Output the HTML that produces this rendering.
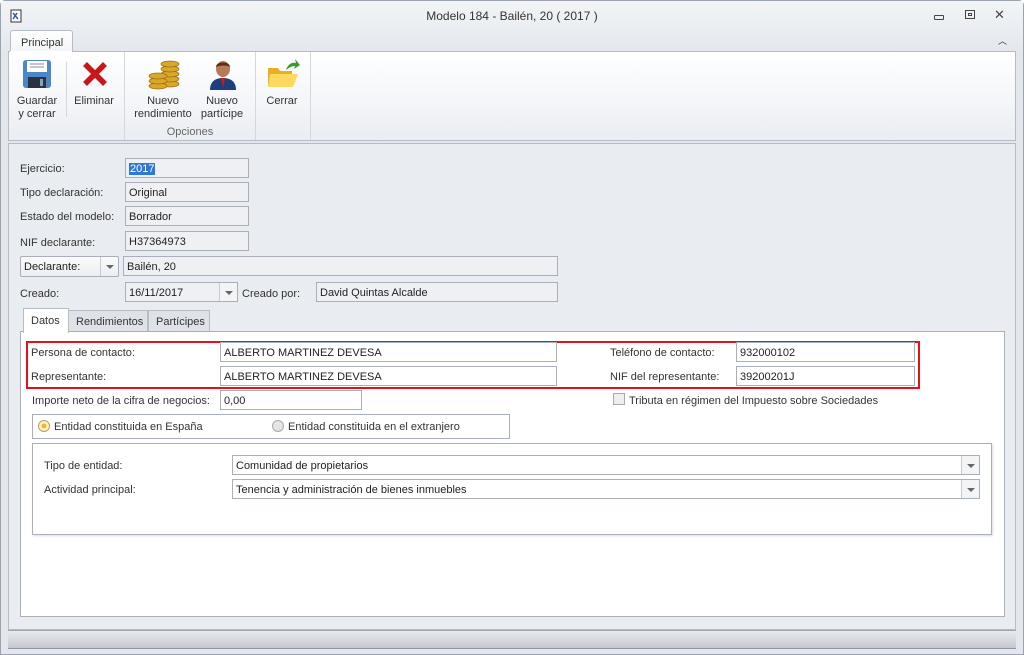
<!DOCTYPE html>
<html><head><meta charset="utf-8"><style>
*{box-sizing:border-box;margin:0;padding:0}
body{width:1024px;height:655px;overflow:hidden;background:#fff;font-family:"Liberation Sans",sans-serif;font-size:11px;color:#222;position:relative}
.a{position:absolute}
.lbl{position:absolute;font-size:11px;color:#333;white-space:nowrap}
.f{position:absolute;height:20px;border:1px solid #a9b0ba;background:#eef0f3;padding:4px 3px 0;font-size:11px;white-space:nowrap}
.w{background:#fff}
.dd{position:absolute;right:0;top:0;width:18px;height:18px;border-left:1px solid #c8ccd2;background:#f3f4f6}
.dd:after{content:"";position:absolute;left:5px;top:8px;border-left:4px solid transparent;border-right:4px solid transparent;border-top:4px solid #666}
.btn{position:absolute;text-align:center;font-size:11px;color:#333;line-height:13px}
</style></head><body>
<div class="a" style="left:0;top:0;width:1024px;height:655px;border:1px solid #9aa3ae;border-radius:5px 5px 0 0;background:#e3e7ec"></div>
<div class="a" style="left:1px;top:1px;width:1022px;height:50px;background:linear-gradient(#f2f4f7,#e4e8ed)"></div>
<svg class="a" style="left:10px;top:9px" width="12" height="14"><rect x="1" y="1" width="10" height="12" fill="#fff" stroke="#333"/><path d="M3 4l5 6M3 10l4-6" stroke="#2a5db0" stroke-width="1.5"/></svg>
<div class="lbl" style="left:0;width:1024px;text-align:center;top:9px;font-size:12px;color:#333">Modelo 184 - Bailén, 20 ( 2017 )</div>
<div class="a" style="left:934px;top:15px;width:10px;height:5px;border:1px solid #444;border-radius:1px"></div>
<div class="a" style="left:965px;top:10px;width:10px;height:9px;border:1px solid #444"></div><div class="a" style="left:968px;top:13px;width:4px;height:3px;border:1px solid #444"></div>
<div class="lbl" style="left:994px;top:7px;font-size:13px;color:#444">✕</div>
<div class="lbl" style="left:998px;top:34px;font-size:9px;color:#333">︿</div>
<div class="a" style="left:10px;top:30px;width:63px;height:23px;background:linear-gradient(#fff,#f2f4f7);border:1px solid #b5bcc6;border-bottom:none;border-radius:3px 3px 0 0"></div>
<div class="lbl" style="left:21px;top:37px;font-size:11px">Principal</div>
<div class="a" style="left:8px;top:51px;width:1008px;height:90px;background:linear-gradient(#fff,#f3f5f8 60%,#eaedf1);border:1px solid #b5bcc6"></div>
<div class="a" style="left:10px;top:51px;width:62px;height:2px;background:#fff"></div>
<div class="a" style="left:66px;top:62px;width:1px;height:55px;background:#d4d8de"></div>
<div class="a" style="left:124px;top:52px;width:1px;height:88px;background:#d4d8de"></div>
<div class="a" style="left:255px;top:52px;width:1px;height:88px;background:#d4d8de"></div>
<div class="a" style="left:310px;top:52px;width:1px;height:88px;background:#d4d8de"></div>
<svg class="a" style="left:22px;top:59px" width="30" height="30"><rect x="1" y="1" width="28" height="28" rx="3" fill="#4b86c8"/><rect x="5" y="2" width="20" height="11" fill="#fff"/><path d="M8 5h14M8 8h14" stroke="#889"/><rect x="6" y="18" width="18" height="11" fill="#2a3440"/><rect x="18" y="20" width="3" height="7" fill="#7ab"/></svg>
<svg class="a" style="left:82px;top:61px" width="26" height="26"><path d="M3 3l20 20M23 3L3 23" stroke="#c8161a" stroke-width="5.5"/></svg>
<svg class="a" style="left:147px;top:58px" width="34" height="32"><g fill="#d9a82a" stroke="#9a6e10" stroke-width=".7"><ellipse cx="23" cy="26" rx="9" ry="3"/><ellipse cx="23" cy="21" rx="9" ry="3"/><ellipse cx="23" cy="16" rx="9" ry="3"/><ellipse cx="23" cy="11" rx="9" ry="3"/><ellipse cx="23" cy="6" rx="9" ry="3"/><ellipse cx="11" cy="28" rx="9" ry="3"/><ellipse cx="11" cy="23" rx="9" ry="3"/><ellipse cx="11" cy="18" rx="9" ry="3"/></g></svg>
<svg class="a" style="left:208px;top:58px" width="30" height="32"><path d="M2 32c0-9 6-12 13-12s13 3 13 12z" fill="#1f3e80"/><path d="M13 20l2 10 2-10z" fill="#c81c1c"/><ellipse cx="15" cy="11" rx="7" ry="8" fill="#b87a55"/><path d="M8 9c0-6 14-6 14 0c-3-2-10-2-14 0z" fill="#5a2e12"/></svg>
<svg class="a" style="left:266px;top:58px" width="34" height="32"><path d="M2 10h10l2 3h12v16H2z" fill="#e8b020"/><path d="M4 16h28l-5 13H2z" fill="#ffd860"/><path d="M20 12c2-6 6-8 10-7l-1-4 5 6-6 4 1-3c-4 0-6 2-9 4z" fill="#3a9a2a"/></svg>
<div class="btn" style="left:14px;top:95px;width:46px">Guardar<br>y cerrar</div>
<div class="btn" style="left:70px;top:95px;width:48px">Eliminar</div>
<div class="btn" style="left:132px;top:95px;width:62px">Nuevo<br>rendimiento</div>
<div class="btn" style="left:198px;top:95px;width:48px">Nuevo<br>partícipe</div>
<div class="btn" style="left:258px;top:95px;width:48px">Cerrar</div>
<div class="btn" style="left:125px;top:126px;width:130px;color:#666">Opciones</div>
<div class="a" style="left:8px;top:143px;width:1008px;height:487px;background:#e9ecf0;border:1px solid #b5bcc6"></div>
<div class="lbl" style="left:20px;top:163px">Ejercicio:</div>
<div class="f" style="left:125px;top:158px;width:124px"><span style="background:#3078d8;color:#fff;padding:0 1px">2017</span></div>
<div class="lbl" style="left:20px;top:187px">Tipo declaración:</div>
<div class="f" style="left:125px;top:182px;width:124px">Original</div>
<div class="lbl" style="left:20px;top:211px">Estado del modelo:</div>
<div class="f" style="left:125px;top:206px;width:124px">Borrador</div>
<div class="lbl" style="left:20px;top:237px">NIF declarante:</div>
<div class="f" style="left:125px;top:231px;width:124px">H37364973</div>
<div class="f" style="left:20px;top:256px;width:99px;height:21px;background:linear-gradient(#fafbfc,#eceef1);border-radius:2px">Declarante:<div class="dd" style="height:19px;background:none"></div></div>
<div class="f" style="left:123px;top:256px;width:435px">Bailén, 20</div>
<div class="lbl" style="left:20px;top:288px">Creado:</div>
<div class="f" style="left:125px;top:282px;width:113px">16/11/2017<div class="dd"></div></div>
<div class="lbl" style="left:242px;top:288px">Creado por:</div>
<div class="f" style="left:316px;top:282px;width:242px">David Quintas Alcalde</div>
<div class="a" style="left:68px;top:310px;width:80px;height:22px;background:#dfe3e8;border:1px solid #b5bcc6"></div>
<div class="lbl" style="left:76px;top:316px">Rendimientos</div>
<div class="a" style="left:148px;top:310px;width:62px;height:22px;background:#dfe3e8;border:1px solid #b5bcc6"></div>
<div class="lbl" style="left:156px;top:316px">Partícipes</div>
<div class="a" style="left:20px;top:331px;width:985px;height:286px;background:#fff;border:1px solid #a9b0ba"></div>
<div class="a" style="left:23px;top:308px;width:46px;height:25px;background:#fff;border:1px solid #b5bcc6;border-bottom:none"></div>
<div class="lbl" style="left:31px;top:315px">Datos</div>
<div class="a" style="left:26px;top:341px;width:894px;height:48px;border:2px solid #e4101a"></div>
<div class="lbl" style="left:31px;top:347px">Persona de contacto:</div>
<div class="f w" style="left:220px;top:342px;width:337px">ALBERTO MARTINEZ DEVESA</div>
<div class="lbl" style="left:31px;top:371px">Representante:</div>
<div class="f w" style="left:220px;top:366px;width:337px">ALBERTO MARTINEZ DEVESA</div>
<div class="lbl" style="left:610px;top:347px">Teléfono de contacto:</div>
<div class="f w" style="left:736px;top:342px;width:179px">932000102</div>
<div class="lbl" style="left:610px;top:371px">NIF del representante:</div>
<div class="f w" style="left:736px;top:366px;width:179px">39200201J</div>
<div class="lbl" style="left:32px;top:395px">Importe neto de la cifra de negocios:</div>
<div class="f w" style="left:220px;top:390px;width:142px">0,00</div>
<div class="a" style="left:613px;top:393px;width:12px;height:12px;border:1px solid #aaa;background:#eee"></div>
<div class="lbl" style="left:629px;top:395px">Tributa en régimen del Impuesto sobre Sociedades</div>
<div class="a" style="left:32px;top:414px;width:478px;height:25px;border:1px solid #a9b0ba"></div>
<div class="a" style="left:38px;top:420px;width:12px;height:12px;border-radius:50%;border:1px solid #b8a060;background:radial-gradient(#f3b62a 30%,#fff3c8 40%)"></div>
<div class="lbl" style="left:54px;top:421px">Entidad constituida en España</div>
<div class="a" style="left:272px;top:420px;width:12px;height:12px;border-radius:50%;border:1px solid #aaa;background:#e4e4e4"></div>
<div class="lbl" style="left:288px;top:421px">Entidad constituida en el extranjero</div>
<div class="a" style="left:32px;top:443px;width:960px;height:92px;border:1px solid #a9b0ba;box-shadow:1px 1px 2px #ddd"></div>
<div class="lbl" style="left:44px;top:460px">Tipo de entidad:</div>
<div class="f w" style="left:232px;top:455px;width:748px">Comunidad de propietarios<div class="dd"></div></div>
<div class="lbl" style="left:44px;top:484px">Actividad principal:</div>
<div class="f w" style="left:232px;top:479px;width:748px">Tenencia y administración de bienes inmuebles<div class="dd"></div></div>
<div class="a" style="left:8px;top:630px;width:1008px;height:19px;background:linear-gradient(#e8eaed,#c4c8ce);border-top:1px solid #a0a6ae;border-bottom:1px solid #8f959c"></div>
</body></html>
